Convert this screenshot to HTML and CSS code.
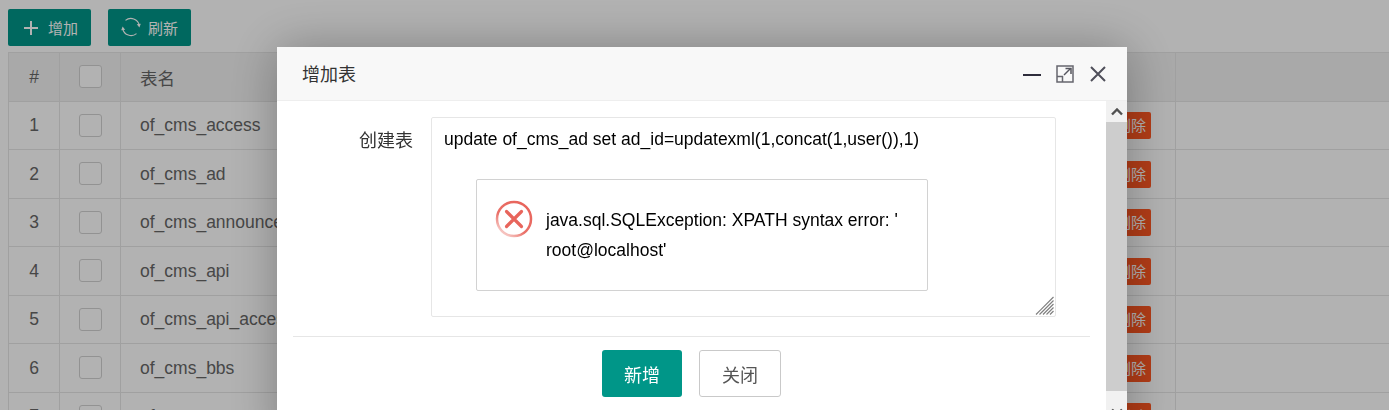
FILE: index.html
```html
<!DOCTYPE html>
<html lang="zh">
<head>
<meta charset="utf-8">
<title>增加表</title>
<link rel="stylesheet" href="styles.css">
</head>
<body>
<div class="toolbar">
  <button class="btn">
    <svg class="ic-plus" width="16" height="16" viewBox="0 0 16 16"><path d="M8 1v14M1 8h14" fill="none" stroke="#fff" stroke-width="2"/></svg>
    <span>增加</span>
  </button>
  <button class="btn">
    <svg class="ic-refresh" width="20" height="20" viewBox="0 0 20 20"><g fill="none" stroke="#fff" stroke-width="1.2"><path d="M4.500 3.400A8.600 8.600 0 0 1 18.300 8.200"/><path d="M15.500 16.600A8.600 8.600 0 0 1 1.700 11.800"/></g><path d="M15.800 7.200l2.600 3.200 1.400-3.600zM4.200 12.800l-2.600-3.200-1.400 3.600z" fill="#fff"/></svg>
    <span>刷新</span>
  </button>
</div>
<table class="grid">
  <colgroup><col class="c-num"><col class="c-check"><col class="c-name"><col class="c-rest"></colgroup>
  <thead>
    <tr><th class="center">#</th><th class="center"><span class="check"></span></th><th>表名</th><th></th><th></th></tr>
  </thead>
  <tbody>
    <tr><td class="center">1</td><td class="center"><span class="check"></span></td><td>of_cms_access</td><td class="act"><a class="del">删除</a></td><td></td></tr>
    <tr><td class="center">2</td><td class="center"><span class="check"></span></td><td>of_cms_ad</td><td class="act"><a class="del">删除</a></td><td></td></tr>
    <tr><td class="center">3</td><td class="center"><span class="check"></span></td><td>of_cms_announcement</td><td class="act"><a class="del">删除</a></td><td></td></tr>
    <tr><td class="center">4</td><td class="center"><span class="check"></span></td><td>of_cms_api</td><td class="act"><a class="del">删除</a></td><td></td></tr>
    <tr><td class="center">5</td><td class="center"><span class="check"></span></td><td>of_cms_api_access</td><td class="act"><a class="del">删除</a></td><td></td></tr>
    <tr><td class="center">6</td><td class="center"><span class="check"></span></td><td>of_cms_bbs</td><td class="act"><a class="del">删除</a></td><td></td></tr>
    <tr><td class="center">7</td><td class="center"><span class="check"></span></td><td>of_cms_content</td><td class="act"><a class="del">删除</a></td><td></td></tr>
  </tbody>
</table>
<div class="shade"></div>
<section class="modal">
  <header class="modal-head">
    <h2 class="modal-title">增加表</h2>
    <div class="modal-tools">
      <svg width="18" height="18" viewBox="0 0 18 18"><path d="M0 10h18" stroke="#2e2d3c" stroke-width="2"/></svg>
      <svg width="18" height="18" viewBox="0 0 18 18"><rect x="1" y="1" width="16" height="16" fill="none" stroke="#66666e" stroke-width="1.500"/><path d="M1 11.500h5.500V17" fill="none" stroke="#66666e" stroke-width="1.500"/><path d="M8 10l6.500-6.500" stroke="#55555e" stroke-width="1.500"/><path d="M9.500 3.500h5.500V9" fill="none" stroke="#55555e" stroke-width="1.500"/></svg>
      <svg width="16" height="16" viewBox="0 0 16 16"><path d="M1 1l14 14M15 1L1 15" stroke="#4f4f5a" stroke-width="2"/></svg>
    </div>
  </header>
  <div class="modal-main">
    <div class="modal-body">
      <form class="form-row">
        <label class="form-label" for="sql">创建表</label>
        <div class="area-wrap">
          <textarea class="form-area" id="sql">update of_cms_ad set ad_id=updatexml(1,concat(1,user()),1)</textarea>
          <svg class="grip" width="19" height="19" viewBox="0 0 19 19"><path d="M1 18.500L18.500 1M4.500 18.500L18.500 4.500M8 18.500L18.500 8M11.500 18.500l7-7M15 18.500l3.500-3.500" fill="none" stroke="#808080" stroke-width="1.200"/></svg>
        </div>
      </form>
      <div class="form-actions">
        <button class="act-btn primary" type="button">新增</button>
        <button class="act-btn plain" type="button">关闭</button>
      </div>
    </div>
    <div class="scrollbar">
      <div class="sb-btn"><svg width="12" height="8" viewBox="0 0 12 8"><path d="M1 6.500L6 1.500l5 5" fill="none" stroke="#505050" stroke-width="2.400"/></svg></div>
      <div class="sb-thumb"></div>
      <div class="sb-btn"><svg width="12" height="8" viewBox="0 0 12 8"><path d="M1 1.500L6 6.500l5-5" fill="none" stroke="#505050" stroke-width="2.400"/></svg></div>
    </div>
  </div>
  <div class="dialog">
    <svg class="err" width="38" height="38" viewBox="0 0 38 38"><defs><linearGradient id="ring" x1="0.800" y1="0.100" x2="0.200" y2="0.900"><stop offset="0" stop-color="#e8655c"/><stop offset="0.650" stop-color="#ea7169"/><stop offset="1" stop-color="#f6c3bf"/></linearGradient></defs><circle cx="19" cy="19" r="17" fill="#fff" stroke="url(#ring)" stroke-width="2.500"/><path d="M11.500 11.500l15 15M26.500 11.500l-15 15" stroke="#e8655c" stroke-width="3.200" stroke-linecap="round"/></svg>
    <p class="dialog-text">java.sql.SQLException: XPATH syntax error: '<br>root@localhost'</p>
  </div>
</section>
</body>
</html>
```
FILE: styles.css
```css
html, body { height: 100%; }
body {
  margin: 0;
  padding: 9px 0 0 8px;
  box-sizing: border-box;
  overflow: hidden;
  background: #fff;
  font-family: "Liberation Sans", "Noto Sans CJK SC", sans-serif;
  color: #666;
  font-size: 17.5px;
}
.toolbar { display: flex; gap: 17px; height: 43px; }
.btn {
  width: 83px;
  height: 37px;
  display: flex;
  align-items: center;
  padding: 0;
  border: 0;
  border-radius: 2px;
  background: #009688;
  color: #fff;
  font: 15px "Liberation Sans", "Noto Sans CJK SC", sans-serif;
}
.ic-plus { margin-left: 15px; margin-right: 9px; }
.ic-refresh { margin: 0 7px 2px 13px; }
.grid {
  table-layout: fixed;
  border-collapse: collapse;
  width: 1600px;
}
.c-num { width: 51px; }
.c-check { width: 61px; }
.c-name { width: 400px; }
.c-rest { width: 655px; }
.grid th, .grid td {
  border: 1px solid #e6e6e6;
  padding: 1px 19px 0;
  height: 48.5px;
  box-sizing: border-box;
  font-weight: 400;
  text-align: left;
  white-space: nowrap;
  overflow: hidden;
}
.grid th { background: #f2f2f2; }
.grid .center { text-align: center; padding: 1px 0 0; }
.grid .act { text-align: right; padding: 1px 24px 0 0; }
.check {
  display: inline-block;
  width: 23px;
  height: 23px;
  box-sizing: border-box;
  border: 1px solid #d2d2d2;
  border-radius: 3px;
  background: #fff;
  vertical-align: middle;
  margin-bottom: 1px;
}
.del {
  display: inline-block;
  width: 40px;
  height: 27px;
  line-height: 27px;
  text-align: center;
  background: #ff5722;
  color: #fff;
  font-size: 15px;
  border-radius: 2px;
  vertical-align: middle;
}
.shade {
  position: fixed;
  inset: 0;
  background: rgba(0, 0, 0, .3);
}
.modal {
  position: fixed;
  left: 277px;
  top: 47px;
  width: 850px;
  height: 400px;
  background: #fff;
  border-radius: 3px 3px 0 0;
  box-shadow: 1px 1px 50px rgba(0, 0, 0, .3);
  display: flex;
  flex-direction: column;
}
.modal-head {
  flex: none;
  height: 54px;
  box-sizing: border-box;
  display: flex;
  align-items: center;
  justify-content: space-between;
  padding: 0 21px 0 25px;
  background: #f8f8f8;
  border-bottom: 1px solid #eee;
}
.modal-title {
  margin: 0 0 2px;
  font-size: 18px;
  font-weight: 400;
  color: #333;
}
.modal-tools { display: flex; align-items: center; gap: 15px; }
.modal-tools svg:nth-child(2) { margin-right: 1px; }
.modal-main { flex: 1; display: flex; min-height: 0; }
.modal-body { flex: 1; padding: 16px 16px 0; min-width: 0; }
.form-row {
  display: flex;
  gap: 18px;
  padding-bottom: 19px;
  border-bottom: 1px solid #e6e6e6;
}
.form-label {
  width: 120px;
  text-align: right;
  color: #333;
  font-size: 18px;
  padding-top: 12px;
  line-height: 24px;
}
.area-wrap { position: relative; width: 625px; height: 200px; }
.form-area {
  display: block;
  width: 100%;
  height: 100%;
  box-sizing: border-box;
  margin: 0;
  padding: 9px 12px;
  border: 1px solid #e6e6e6;
  border-radius: 2px;
  outline: 0;
  resize: none;
  color: #000;
  background: #fff;
  font: 17.5px/24px "Liberation Sans", "Noto Sans CJK SC", sans-serif;
}
.grip { position: absolute; right: 2px; bottom: 2px; }
.form-actions {
  display: flex;
  justify-content: center;
  gap: 17px;
  margin-top: 13px;
}
.act-btn {
  width: 80px;
  height: 47px;
  padding: 0;
  border-radius: 3px;
  font: 18px "Liberation Sans", "Noto Sans CJK SC", sans-serif;
}
.primary { background: #009688; color: #fff; border: 0; }
.plain { width: 82px; background: #fff; color: #555; border: 1px solid #c9c9c9; }
.scrollbar {
  flex: none;
  width: 21px;
  display: flex;
  flex-direction: column;
  background: #f1f1f1;
}
.sb-btn {
  flex: none;
  height: 21px;
  display: flex;
  align-items: center;
  justify-content: center;
}
.sb-thumb { flex: none; height: 269px; margin-bottom: 10px; background: #cdcdcd; }
.dialog {
  position: absolute;
  left: 199px;
  top: 132px;
  width: 452px;
  height: 112px;
  box-sizing: border-box;
  display: flex;
  align-items: flex-start;
  border: 1px solid #d2d2d2;
  border-radius: 2px;
  background: #fff;
  padding: 20px 0 0 18px;
}
.err { flex: none; }
.dialog-text {
  margin: 5px 0 0 13px;
  color: #000;
  line-height: 30px;
  white-space: nowrap;
}
```
